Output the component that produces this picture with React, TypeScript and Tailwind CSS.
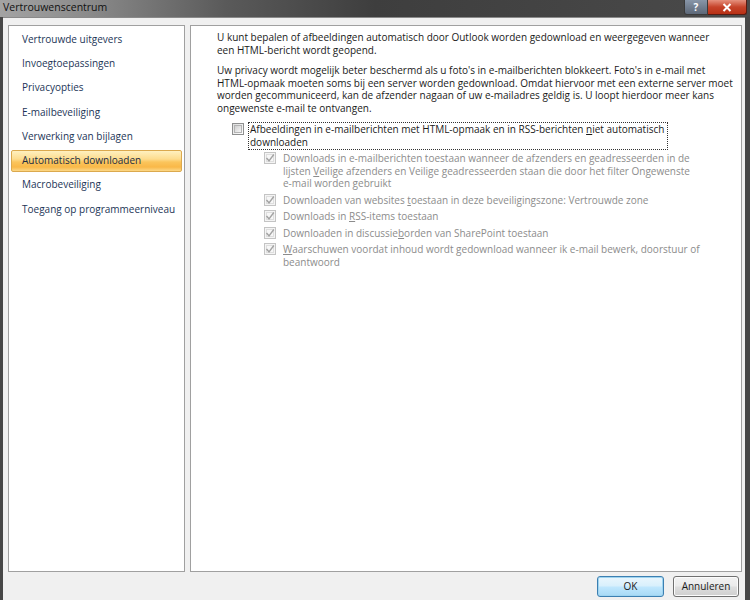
import React from 'react';

const navItems = [
  'Vertrouwde uitgevers',
  'Invoegtoepassingen',
  'Privacyopties',
  'E-mailbeveiliging',
  'Verwerking van bijlagen',
  'Automatisch downloaden',
  'Macrobeveiliging',
  'Toegang op programmeerniveau',
];

function CheckBox({ checked, disabled }: { checked?: boolean; disabled?: boolean }) {
  return (
    <span
      className={
        disabled
          ? 'flex items-center justify-center w-[12px] h-[12px] shrink-0 border border-[#c4c4c4] bg-[#f4f4f4]'
          : 'flex items-center justify-center w-[12px] h-[12px] shrink-0 border border-[#8e8f8f] bg-[linear-gradient(135deg,#dcdcdc,#ffffff)]'
      }
    >
      <span
        className={
          disabled
            ? 'flex items-center justify-center w-[8px] h-[8px] border border-[#dedede] bg-[#f7f7f7]'
            : 'flex items-center justify-center w-[8px] h-[8px] border border-[#b4b4b4] bg-[linear-gradient(135deg,#cfcfcf,#f6f6f6)]'
        }
      >
        {checked && (
          <svg width="10" height="10" viewBox="0 0 10 10" className="overflow-visible">
            <path d="M1.5 5 L4 7.8 L8.8 1.5" fill="none" stroke="#a3a3a3" strokeWidth="1.4" />
          </svg>
        )}
      </span>
    </span>
  );
}

function SubOption({ children }: { children: React.ReactNode }) {
  return (
    <div className="flex items-start">
      <div className="pr-[7px]">
        <CheckBox checked disabled />
      </div>
      <div className="text-[#8c8c8c] whitespace-nowrap">{children}</div>
    </div>
  );
}

export default function App() {
  return (
    <div
      className="w-[750px] h-[600px] flex flex-col bg-[#474747] overflow-hidden"
      style={{ fontFamily: '"Open Sans", "Noto Sans", sans-serif' }}
    >
      {/* Title bar */}
      <div className="h-[17px] shrink-0 flex items-start bg-[linear-gradient(90deg,#a3a3a3_0%,#8a8a8a_12%,#5a5a5a_30%,#3e3e3e_50%,#4a4a4a_100%)]">
        <div className="pl-[3px] text-[10.5px] leading-[15px] text-[#111111]">Vertrouwenscentrum</div>
        <div className="ml-auto mr-[3px] flex h-[15px]">
          <div className="w-[24px] flex items-center justify-center rounded-bl-[3px] border border-t-0 border-[#3b3b3b] bg-[linear-gradient(180deg,#8896a8,#5d6878)] text-[10px] font-bold text-white leading-none">
            ?
          </div>
          <div className="w-[39px] flex items-center justify-center rounded-br-[3px] border border-t-0 border-l-0 border-[#5a1b12] bg-[linear-gradient(180deg,#e6917e,#c6432a_50%,#b83015)]">
            <svg width="10" height="9" viewBox="0 0 10 9">
              <path d="M1.5 1 L8.5 8 M8.5 1 L1.5 8" stroke="#ffffff" strokeWidth="2" />
            </svg>
          </div>
        </div>
      </div>

      {/* Body */}
      <div className="flex-1 flex flex-col ml-[3px] mr-[5px] bg-[#f0f0f0] border-t border-[#8a8a8a] pt-[7px] pl-[5px] pr-[3px] pb-[3px] min-w-0">
        <div className="flex-1 flex gap-[5px] min-h-0 min-w-0">
          {/* Left nav */}
          <div className="w-[177px] shrink-0 bg-white border border-[#a0a0a0] pt-[1px] px-[2px] text-[10px] text-[#1c3557]">
            {navItems.map((item) => (
              <div key={item} className="h-[24.3px] flex items-center whitespace-nowrap">
                {item === 'Automatisch downloaden' ? (
                  <div className="w-full h-[22px] flex items-center pl-[10px] rounded-[2px] border border-[#dba94e] bg-[linear-gradient(180deg,#fff0bf_0%,#fddc8e_40%,#fbc55c_55%,#f9b848_80%,#fcd887_100%)] text-[#1b2c44]">
                    {item}
                  </div>
                ) : (
                  <div className="pl-[11px]">{item}</div>
                )}
              </div>
            ))}
          </div>

          {/* Right content */}
          <div className="flex-1 min-w-0 overflow-hidden bg-white border border-[#a0a0a0] pl-[26px] pt-[5px] text-[10px] leading-[12.5px] text-[#1a1a1a]">
            <p className="whitespace-nowrap">
              U kunt bepalen of afbeeldingen automatisch door Outlook worden gedownload en weergegeven wanneer
              <br />
              een HTML-bericht wordt geopend.
            </p>
            <p className="whitespace-nowrap mt-[8px]">
              Uw privacy wordt mogelijk beter beschermd als u foto's in e-mailberichten blokkeert. Foto's in e-mail met
              <br />
              HTML-opmaak moeten soms bij een server worden gedownload. Omdat hiervoor met een externe server moet
              <br />
              worden gecommuniceerd, kan de afzender nagaan of uw e-mailadres geldig is. U loopt hierdoor meer kans
              <br />
              ongewenste e-mail te ontvangen.
            </p>

            <div className="flex items-start mt-[8px] ml-[15px]">
              <div className="pt-[1px] pr-[4px]">
                <CheckBox />
              </div>
              <div className="whitespace-nowrap border border-dotted border-[#333333] pl-[1px] pr-[3px] pb-[1px]">
                Afbeeldingen in e-mailberichten met HTML-opmaak en in RSS-berichten <u>n</u>iet automatisch
                <br />
                downloaden
              </div>
            </div>

            <div className="ml-[47px] mt-[2px] flex flex-col gap-[4px]">
              <SubOption>
                Downloads in e-mailberichten toestaan wanneer de afzenders en geadresseerden in de
                <br />
                lijsten <u>V</u>eilige afzenders en Veilige geadresseerden staan die door het filter Ongewenste
                <br />
                e-mail worden gebruikt
              </SubOption>
              <SubOption>
                Downloaden van websites <u>t</u>oestaan in deze beveiligingszone: Vertrouwde zone
              </SubOption>
              <SubOption>
                Downloads in <u>R</u>SS-items toestaan
              </SubOption>
              <SubOption>
                Downloaden in discussie<u>b</u>orden van SharePoint toestaan
              </SubOption>
              <SubOption>
                <u>W</u>aarschuwen voordat inhoud wordt gedownload wanneer ik e-mail bewerk, doorstuur of
                <br />
                beantwoord
              </SubOption>
            </div>
          </div>
        </div>

        {/* Buttons */}
        <div className="h-[21px] mt-[4px] flex justify-end gap-[9px] pr-[3px] text-[10px]">
          <button className="w-[67px] h-[21px] rounded-[3px] border border-[#3c7fb1] bg-[linear-gradient(180deg,#eaf6fd_0%,#d9f0fc_45%,#bee6fd_55%,#a7d9f5_100%)] text-[#1a1a1a] shadow-[inset_0_0_0_1px_#9fd4f0]">
            OK
          </button>
          <button className="w-[66px] h-[21px] rounded-[3px] border border-[#707070] bg-[linear-gradient(180deg,#f2f2f2_0%,#ebebeb_45%,#dddddd_55%,#cfcfcf_100%)] text-[#1a1a1a] shadow-[inset_0_0_0_1px_#fcfcfc]">
            Annuleren
          </button>
        </div>
      </div>
    </div>
  );
}
